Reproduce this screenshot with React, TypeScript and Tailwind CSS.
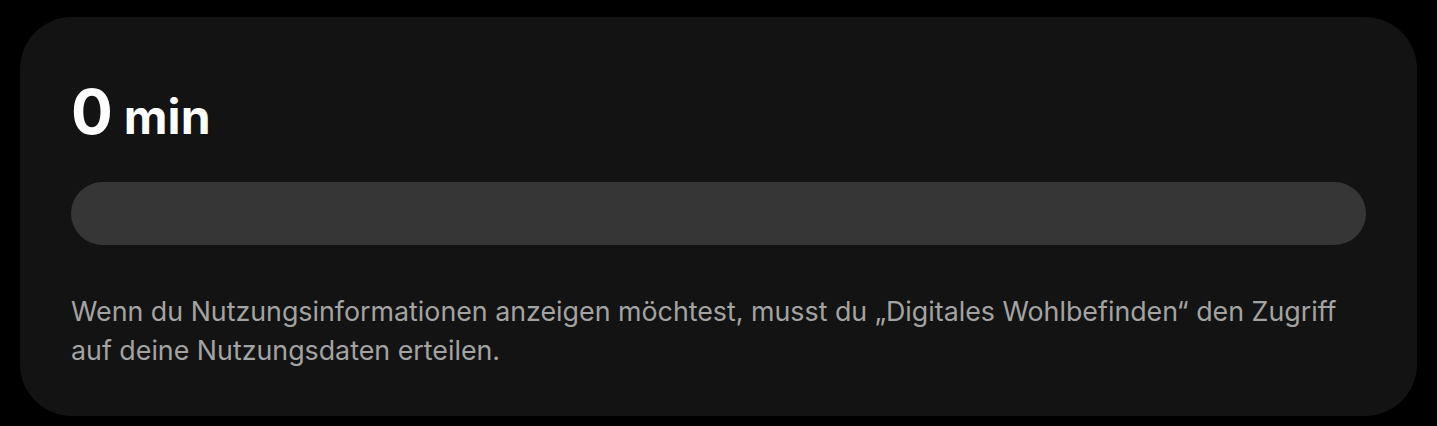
export default function App() {
  return (
    <div className="w-[1437px] h-[426px] bg-black pt-[17px] pl-[20px]">
      <section className="w-[1397px] h-[399px] rounded-[52px] bg-[#131313] px-[51px] pt-[64px] font-['Inter',sans-serif]">
        <h1 className="flex items-baseline text-white font-bold leading-none">
          <span className="text-[62px] tracking-[-2px]">0</span>
          <span className="ml-[13px] text-[48px]">min</span>
        </h1>
        <div className="mt-[39px] h-[63px] w-full rounded-full bg-[#363636]" />
        <p className="mt-[47px] text-[26.8px] leading-[39px] text-[#a3a3a3]">
          Wenn du Nutzungsinformationen anzeigen möchtest, musst du „Digitales Wohlbefinden“ den Zugriff auf deine Nutzungsdaten erteilen.
        </p>
      </section>
    </div>
  );
}
